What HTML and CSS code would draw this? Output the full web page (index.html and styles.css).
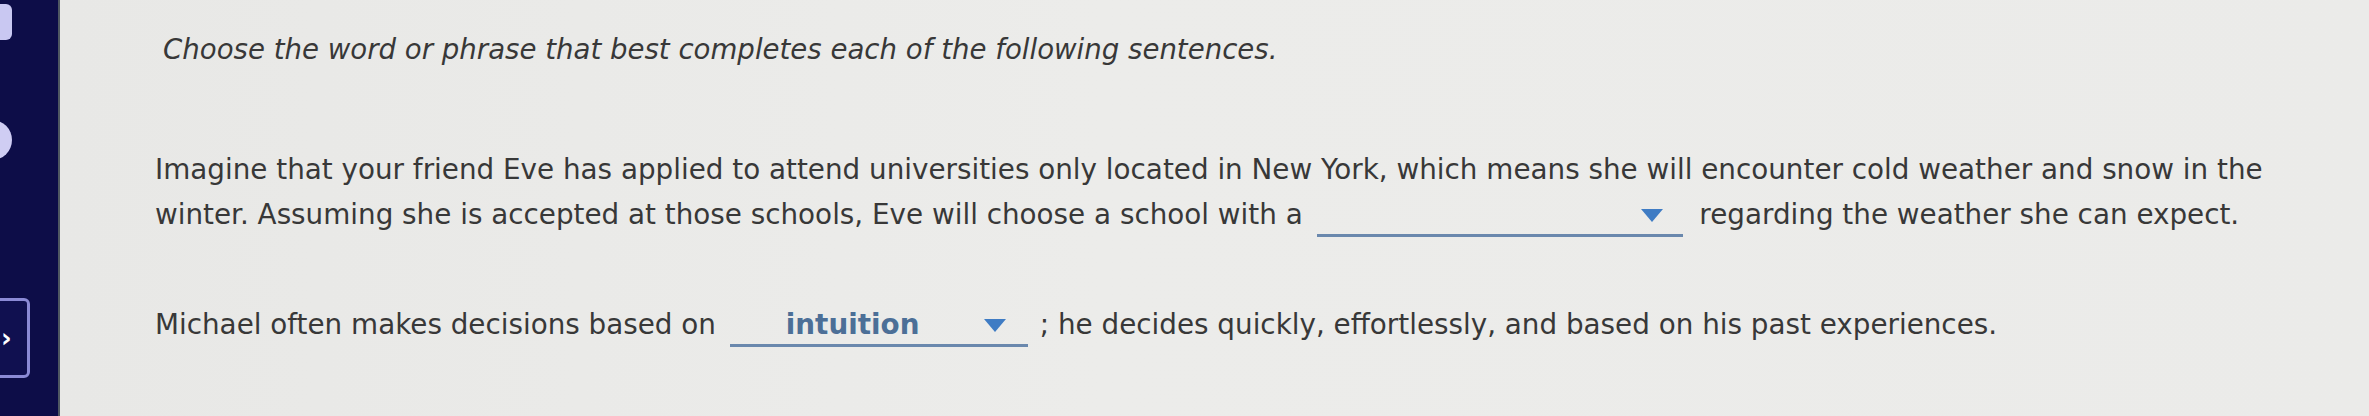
FILE: index.html
```html
<!DOCTYPE html>
<html lang="en">
<head>
<meta charset="utf-8">
<title>Question</title>
<link rel="stylesheet" href="styles.css">
</head>
<body>
<div class="app">
  <aside class="sidebar">
    <div class="side-tab"></div>
    <div class="side-dot"></div>
    <div class="side-next"><span class="chev">&#8250;</span></div>
  </aside>
  <main class="content">
    <p class="instructions">Choose the word or phrase that best completes each of the following sentences.</p>
    <p class="question q1">Imagine that your friend Eve has applied to attend universities only located in New York, which means she will encounter cold weather and snow in the winter. Assuming she is accepted at those schools, Eve will choose a school with a <span class="dropdown dd-wide"><span class="dd-value">&nbsp;</span><span class="caret"></span></span> regarding the weather she can expect.</p>
    <p class="question q2">Michael often makes decisions based on <span class="dropdown dd-narrow"><span class="dd-value">intuition</span><span class="caret"></span></span>; he decides quickly, effortlessly, and based on his past experiences.</p>
  </main>
</div>
</body>
</html>
```

FILE: styles.css
```css
html, body {
  margin: 0;
  padding: 0;
  height: 416px;
  overflow: hidden;
}
body {
  font-family: "DejaVu Sans", Verdana, sans-serif;
  background: #ebebe9;
  color: #383838;
}
.app {
  display: flex;
  height: 416px;
}
.sidebar {
  width: 58px;
  flex: none;
  background: #0d0d48;
  border-right: 2px solid #4f5862;
  display: flex;
  flex-direction: column;
  align-items: flex-start;
}
.side-tab {
  width: 22px;
  height: 36px;
  margin: 4px 0 0 -10px;
  background: #c9c8f2;
  border-radius: 6px;
}
.side-dot {
  width: 40px;
  height: 40px;
  margin: 80px 0 0 -28px;
  background: #cfcdf3;
  border-radius: 50%;
}
.side-next {
  width: 40px;
  height: 80px;
  margin: 138px 0 0 -10px;
  border: 3px solid #8b8ad6;
  border-radius: 6px;
  background: #101050;
  display: flex;
  align-items: center;
  justify-content: flex-start;
  padding-left: 8px;
  box-sizing: border-box;
}
.chev {
  color: #ffffff;
  font-size: 26px;
  font-weight: bold;
  line-height: 1;
}
.content {
  flex: 1;
  padding: 34px 80px 0 95px;
  background: linear-gradient(90deg, #e8e8e6 0%, #ececea 45%, #ebebe9 100%);
}
.instructions {
  margin: 0;
  padding-left: 8px;
  font-size: 27.6px;
  line-height: 32px;
  font-style: italic;
}
.question {
  margin: 0;
  font-size: 27.8px;
  line-height: 45px;
}
.q1 {
  margin-top: 81px;
}
.q2 {
  margin-top: 65px;
}
.dropdown {
  display: inline-block;
  box-sizing: border-box;
  line-height: 32px;
  padding-bottom: 3px;
  border-bottom: 3px solid #6a88ad;
  margin: 0 8px 0 5px;
  white-space: nowrap;
  text-align: left;
}
.dd-wide {
  width: 366px;
}
.dd-narrow {
  width: 298px;
  padding-left: 56px;
  margin-right: 12px;
}
.dd-value {
  display: inline-block;
  color: #4c6f97;
  font-weight: bold;
}
.dd-wide .dd-value {
  width: 324px;
}
.dd-narrow .dd-value {
  width: 198px;
}
.caret {
  display: inline-block;
  width: 0;
  height: 0;
  border-left: 11px solid transparent;
  border-right: 11px solid transparent;
  border-top: 13px solid #3f7cc4;
  vertical-align: 2px;
}
```
